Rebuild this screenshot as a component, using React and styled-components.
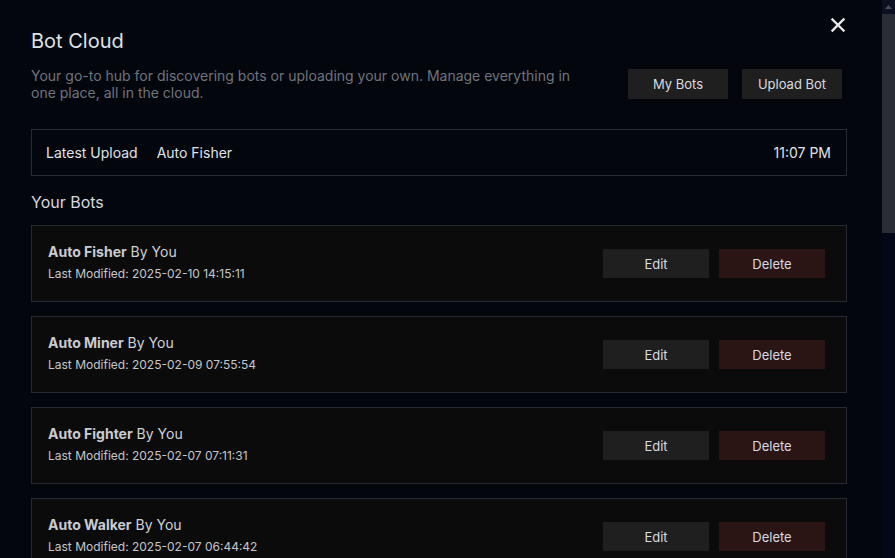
import React from 'react'
import styled, { createGlobalStyle } from 'styled-components'

const GlobalStyle = createGlobalStyle`
  html, body {
    margin: 0;
    padding: 0;
    background: #03060d;
    font-family: Inter, "Noto Sans", sans-serif;
  }
`

const Layout = styled.div`
  display: flex;
  height: 100vh;
  overflow: hidden;
  background: #03060d;
`

const Content = styled.div`
  flex: 1;
  overflow: hidden;
`

const ScrollTrack = styled.div`
  width: 13px;
  display: flex;
  flex-direction: column;
  background: #020817;
`

const ScrollArrow = styled.div`
  height: 14px;
  background: #0b1120;
  display: flex;
  align-items: center;
  justify-content: center;
`

const ScrollThumb = styled.div`
  height: 219px;
  background: #2a2d35;
`

const Page = styled.div`
  position: relative;
  padding: 29px 34px 40px 31px;
  color: #e2e4e8;
`

const CloseButton = styled.button`
  position: absolute;
  top: 15px;
  right: 34px;
  width: 20px;
  height: 20px;
  padding: 0;
  border: none;
  background: none;
  cursor: pointer;
  display: flex;
  align-items: center;
  justify-content: center;
`

const Header = styled.div`
  display: flex;
  align-items: flex-end;
  justify-content: space-between;
  width: 811px;
`

const Title = styled.h1`
  margin: 0 0 14px;
  font-size: 20px;
  font-weight: 400;
  color: #dfe2e6;
`

const Subtitle = styled.p`
  margin: 0;
  width: 560px;
  font-size: 14px;
  line-height: 17px;
  color: #70747c;
`

const HeaderButtons = styled.div`
  display: flex;
  gap: 14px;
  margin-bottom: 2px;
`

const Button = styled.button`
  width: ${p => p.$w || 100}px;
  height: ${p => p.$h || 30}px;
  border: none;
  font-family: inherit;
  font-size: 13px;
  color: #d8dbe0;
  background: ${p => (p.$danger ? '#2b1414' : '#1f1f1f')};
  cursor: pointer;
`

const LatestBar = styled.div`
  margin-top: 28px;
  height: 47px;
  width: 816px;
  border: 1px solid #262b36;
  display: flex;
  align-items: center;
  padding: 0 15px 0 14px;
  box-sizing: border-box;
  font-size: 14px;
  color: #e0e3e7;
`

const LatestLabel = styled.span`
  margin-right: 19px;
`

const LatestTime = styled.span`
  margin-left: auto;
`

const SectionTitle = styled.h2`
  margin: 16px 0 13px;
  font-size: 16px;
  font-weight: 400;
  color: #d6d9de;
`

const List = styled.div`
  display: flex;
  flex-direction: column;
  gap: 14px;
  width: 816px;
`

const Card = styled.div`
  height: 77px;
  box-sizing: border-box;
  background: #0b0b0b;
  border: 1px solid #252a35;
  display: flex;
  align-items: center;
  padding: 0 21px 0 16px;
`

const Info = styled.div`
  display: flex;
  flex-direction: column;
  gap: 6px;
  margin-top: -3px;
`

const BotName = styled.div`
  font-size: 14px;
  color: #cfd2d7;
  b {
    font-weight: 700;
    color: #c9ccd1;
  }
`

const Modified = styled.div`
  font-size: 12px;
  color: #c4c7cc;
`

const Actions = styled.div`
  margin-left: auto;
  display: flex;
  gap: 10px;
`

const bots = [
  { name: 'Auto Fisher', modified: '2025-02-10 14:15:11' },
  { name: 'Auto Miner', modified: '2025-02-09 07:55:54' },
  { name: 'Auto Fighter', modified: '2025-02-07 07:11:31' },
  { name: 'Auto Walker', modified: '2025-02-07 06:44:42' },
]

const App = () => {
  return (
    <Layout>
      <GlobalStyle />
      <Content>
        <Page>
          <CloseButton aria-label='Close'>
            <svg width='16' height='16' viewBox='0 0 16 16'>
              <path d='M2.5 2.5L13.5 13.5M13.5 2.5L2.5 13.5' stroke='#e6e8ec' strokeWidth='2.4' strokeLinecap='square' />
            </svg>
          </CloseButton>
          <Header>
            <div>
              <Title>Bot Cloud</Title>
              <Subtitle>
                Your go-to hub for discovering bots or uploading your own. Manage everything in one place, all in the cloud.
              </Subtitle>
            </div>
            <HeaderButtons>
              <Button>My Bots</Button>
              <Button>Upload Bot</Button>
            </HeaderButtons>
          </Header>
          <LatestBar>
            <LatestLabel>Latest Upload</LatestLabel>
            <span>Auto Fisher</span>
            <LatestTime>11:07 PM</LatestTime>
          </LatestBar>
          <SectionTitle>Your Bots</SectionTitle>
          <List>
            {bots.map(bot => (
              <Card key={bot.name}>
                <Info>
                  <BotName><b>{bot.name}</b> By You</BotName>
                  <Modified>Last Modified: {bot.modified}</Modified>
                </Info>
                <Actions>
                  <Button $w={106} $h={29}>Edit</Button>
                  <Button $w={106} $h={29} $danger>Delete</Button>
                </Actions>
              </Card>
            ))}
          </List>
        </Page>
      </Content>
      <ScrollTrack>
        <ScrollArrow>
          <svg width='7' height='4' viewBox='0 0 7 4'>
            <path d='M0 4L3.5 0L7 4Z' fill='#4a4f5a' />
          </svg>
        </ScrollArrow>
        <ScrollThumb />
      </ScrollTrack>
    </Layout>
  )
}

export default App
